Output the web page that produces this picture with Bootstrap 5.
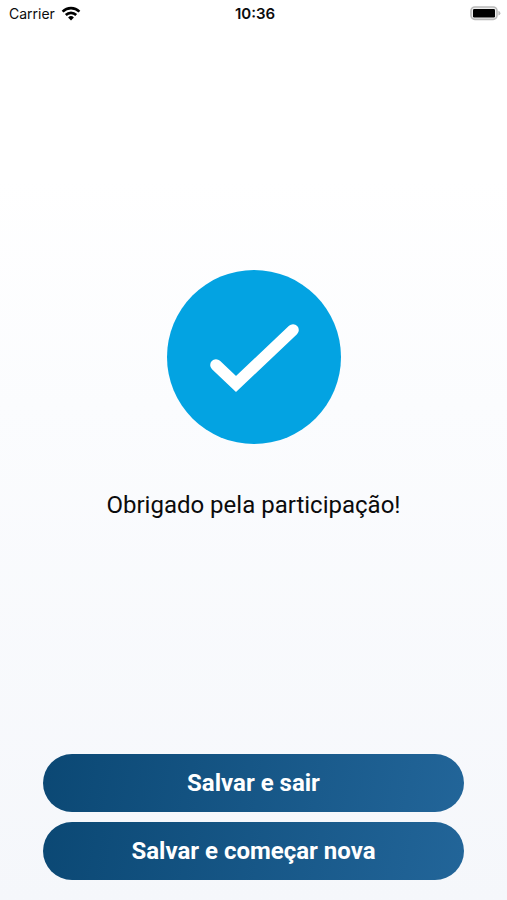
<!DOCTYPE html>
<html lang="pt-BR">
<head>
<meta charset="utf-8">
<meta name="viewport" content="width=device-width, initial-scale=1">
<title>Obrigado</title>
<link href="https://cdn.jsdelivr.net/npm/bootstrap@5.3.0/dist/css/bootstrap.min.css" rel="stylesheet">
<style>
  body { background: linear-gradient(#ffffff 0%, #ffffff 20%, #fbfcfe 45%, #f5f7fb 100%); font-family: Roboto, sans-serif; color: #0b0b0c; }
  .status-bar { height: 28px; padding: 0 6px 0 9px; font: 14px/28px Inter, sans-serif; }
  .status-bar .clock { font-size: 15px; font-weight: 600; }
  .carrier { gap: 6px; }
  .check-icon { width: 174px; height: 174px; }
  .thanks { font-size: 24px; line-height: 30px; margin-top: 46px; }
  .message { padding-top: 8px; }
  .actions { padding: 0 43px 20px; gap: 10px; }
  .btn-save { height: 58px; border: 0; color: #fff; font-size: 24px; line-height: 30px; font-weight: 700; background: linear-gradient(100deg, #0b4874 0%, #226599 100%); }
  .btn-save:hover { color: #fff; }
</style>
</head>
<body class="min-vh-100 d-flex flex-column">
  <header class="status-bar row g-0 align-items-center w-100">
    <div class="col d-flex align-items-center carrier">
      <span>Carrier</span>
      <svg width="20" height="16" viewBox="0 0 20 16" aria-hidden="true"><g fill="none" stroke="#000" stroke-width="2.6"><path d="M1.6 5.6a12 12 0 0 1 16.8 0"/><path d="M4.8 9a7.4 7.4 0 0 1 10.4 0"/></g><path d="M10 14.4 7.1 11.4a4.1 4.1 0 0 1 5.8 0z"/></svg>
    </div>
    <div class="col-auto clock">10:36</div>
    <div class="col d-flex justify-content-end">
      <svg width="31" height="16" viewBox="0 0 31 16" aria-hidden="true"><rect x="1" y="1" width="26" height="12.4" rx="3.8" fill="#eee" stroke="#b9b9b9" stroke-width="1.6"/><rect x="3" y="3" width="22" height="8.4" rx="1.2"/><path d="M28.4 4.8q2 .6 2 2.4t-2 2.4z" fill="#b9b9b9"/></svg>
    </div>
  </header>
  <main class="message flex-grow-1 d-flex flex-column align-items-center justify-content-center text-center">
    <svg class="check-icon" viewBox="0 0 174 174" role="img" aria-label="Concluído"><circle cx="87" cy="87" r="87" fill="#03a3e2"/><path d="M49 95 69 114 126 60" fill="none" stroke="#fff" stroke-width="11.6" stroke-linecap="round"/></svg>
    <p class="thanks mb-0">Obrigado pela participação!</p>
  </main>
  <footer class="actions d-flex flex-column">
    <button type="button" class="btn btn-save rounded-pill">Salvar e sair</button>
    <button type="button" class="btn btn-save rounded-pill">Salvar e começar nova</button>
  </footer>
<script src="https://cdn.jsdelivr.net/npm/bootstrap@5.3.0/dist/js/bootstrap.bundle.min.js"></script>
</body>
</html>
